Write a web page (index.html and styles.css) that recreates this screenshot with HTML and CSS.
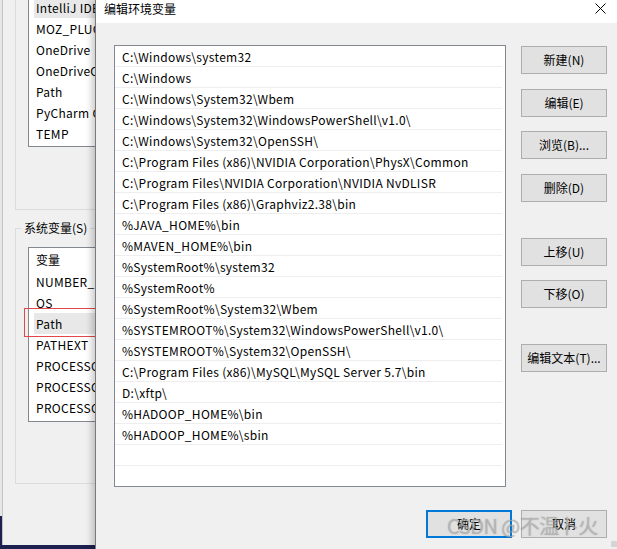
FILE: index.html
```html
<!DOCTYPE html>
<html lang="zh-CN">
<head>
<meta charset="utf-8">
<title>编辑环境变量</title>
<link rel="stylesheet" href="styles.css">
</head>
<body>
<div class="desktop">
  <div class="behind"></div>
  <div class="bgwin">
    <div class="group1">
      <div class="vlist vlist-user">
        <div class="vrow sel">IntelliJ IDE</div>
        <div class="vrow">MOZ_PLUG</div>
        <div class="vrow">OneDrive</div>
        <div class="vrow">OneDriveC</div>
        <div class="vrow">Path</div>
        <div class="vrow">PyCharm C</div>
        <div class="vrow">TEMP</div>
      </div>
    </div>
    <fieldset class="group2">
      <legend>系统变量(S)</legend>
      <div class="vlist vlist-sys">
        <div class="vhead">变量</div>
        <div class="vrow">NUMBER_</div>
        <div class="vrow">OS</div>
        <div class="vrow sel">Path</div>
        <div class="vrow">PATHEXT</div>
        <div class="vrow">PROCESSO</div>
        <div class="vrow">PROCESSO</div>
        <div class="vrow">PROCESSO</div>
      </div>
    </fieldset>
    <div class="redmark"></div>
  </div>

  <div class="dialog">
    <div class="titlebar">
      <span class="title">编辑环境变量</span>
      <svg class="close" width="11" height="11" viewBox="0 0 11 11"><path d="M0.5 0.5 L10.5 10.5 M10.5 0.5 L0.5 10.5" stroke="#000" stroke-width="1" fill="none"/></svg>
    </div>
    <div class="dbody">
      <div class="main">
        <div class="plist">
          <div class="prow">C:\Windows\system32</div>
          <div class="prow">C:\Windows</div>
          <div class="prow">C:\Windows\System32\Wbem</div>
          <div class="prow">C:\Windows\System32\WindowsPowerShell\v1.0\</div>
          <div class="prow">C:\Windows\System32\OpenSSH\</div>
          <div class="prow">C:\Program Files (x86)\NVIDIA Corporation\PhysX\Common</div>
          <div class="prow">C:\Program Files\NVIDIA Corporation\NVIDIA NvDLISR</div>
          <div class="prow">C:\Program Files (x86)\Graphviz2.38\bin</div>
          <div class="prow">%JAVA_HOME%\bin</div>
          <div class="prow">%MAVEN_HOME%\bin</div>
          <div class="prow">%SystemRoot%\system32</div>
          <div class="prow">%SystemRoot%</div>
          <div class="prow">%SystemRoot%\System32\Wbem</div>
          <div class="prow">%SYSTEMROOT%\System32\WindowsPowerShell\v1.0\</div>
          <div class="prow">%SYSTEMROOT%\System32\OpenSSH\</div>
          <div class="prow">C:\Program Files (x86)\MySQL\MySQL Server 5.7\bin</div>
          <div class="prow">D:\xftp\</div>
          <div class="prow">%HADOOP_HOME%\bin</div>
          <div class="prow">%HADOOP_HOME%\sbin</div>
          <div class="prow"></div>
          <div class="prow"></div>
        </div>
        <div class="btns">
          <button class="btn b-new">新建(N)</button>
          <button class="btn b-edit">编辑(E)</button>
          <button class="btn b-browse">浏览(B)...</button>
          <button class="btn b-del">删除(D)</button>
          <button class="btn b-up">上移(U)</button>
          <button class="btn b-down">下移(O)</button>
          <button class="btn b-text">编辑文本(T)...</button>
        </div>
      </div>
      <div class="footer">
        <button class="btn ok">确定</button>
        <button class="btn">取消</button>
      </div>
    </div>
    <div class="grip"></div>
  </div>

  <div class="watermark">CSDN @不温卜火</div>
</div>
</body>
</html>
```

FILE: styles.css
```css
* { box-sizing: border-box; }
html, body { margin: 0; padding: 0; }
body {
  width: 617px;
  height: 549px;
  overflow: hidden;
  background: #1d2150;
  font-family: "Noto Sans CJK SC", "Noto Sans", sans-serif;
  font-size: 12px;
  color: #000;
}
.desktop {
  position: relative;
  width: 617px;
  height: 549px;
  overflow: hidden;
}
.behind {
  position: absolute;
  left: 0;
  top: 0;
  width: 3px;
  height: 516px;
  background: #e6e6e6;
}
.bgwin {
  position: absolute;
  left: 2px;
  top: 0;
  width: 94px;
  height: 545px;
  background: #f0f0f0;
  border-left: 1px solid #c4c4c4;
  padding-left: 12px;
  overflow: hidden;
}
.group1 {
  margin-top: -20px;
  height: 230px;
  width: 100px;
  border: 1px solid #dcdcdc;
  padding: 15px 0 0 12px;
}
.vlist {
  background: #fff;
  border: 1px solid #828790;
  width: 68px;
  border-right: none;
  overflow: hidden;
}
.vlist-user {
  height: 151px;
}
.vrow {
  height: 21px;
  line-height: 21px;
  margin-left: 5px;
  padding-left: 2px;
  white-space: nowrap;
  overflow: hidden;
  letter-spacing: 0.3px;
}
.vrow.sel { background: #e8e8e8; }
.vhead {
  height: 23px;
  line-height: 23px;
  margin-left: 5px;
  padding-left: 2px;
}
.group2 {
  margin: 10px 0 0 0;
  width: 100px;
  border: 1px solid #dcdcdc;
  padding: 0 0 61px 12px;
  min-width: 0;
}
.group2 legend {
  padding: 0 3px;
  margin-left: -7px;
  line-height: 16px;
  font-size: 12px;
}
.vlist-sys {
  margin-top: 11px;
  height: 175px;
}
.redmark {
  position: absolute;
  left: 21px;
  top: 308px;
  width: 80px;
  height: 29px;
  border: 1px solid #e2474b;
}

.dialog {
  position: absolute;
  left: 95px;
  top: 0;
  width: 530px;
  height: 560px;
  background: #f0f0f0;
  border-left: 1px solid #7a7a7a;
  box-shadow: -3px 0 7px rgba(0, 0, 0, 0.22);
  display: flex;
  flex-direction: column;
}
.titlebar {
  height: 23px;
  background: #fff;
  display: flex;
  align-items: center;
  padding-left: 8px;
  padding-right: 19px;
  justify-content: space-between;
}
.title { line-height: 16px; position: relative; top: -3px; }
.close { position: relative; top: -3px; }
.dbody {
  padding: 22px 0 0 18px;
  width: 521px;
}
.main {
  display: flex;
  gap: 15px;
}
.plist {
  width: 392px;
  height: 442px;
  background: #fff;
  border: 1px solid #828790;
  padding-right: 3px;
  overflow: hidden;
}
.prow {
  height: 21px;
  line-height: 21px;
  border-bottom: 1px solid #eeeeee;
  padding-left: 7px;
  white-space: nowrap;
  letter-spacing: 0.3px;
}
.btns {
  display: flex;
  flex-direction: column;
  width: 86px;
}
.btn {
  font-family: "Noto Sans CJK SC", "Noto Sans", sans-serif;
  font-size: 12px;
  color: #000;
  width: 86px;
  height: 28px;
  background: #e1e1e1;
  border: 1px solid #adadad;
  padding: 0;
  margin: 0;
  line-height: 26px;
}
.b-new { margin-top: 1px; }
.b-edit { margin-top: 15px; }
.b-browse { margin-top: 14px; }
.b-del { margin-top: 15px; }
.b-up { margin-top: 36px; }
.b-down { margin-top: 14px; }
.b-text { margin-top: 36px; }
.footer {
  margin-top: 23px;
  display: flex;
  justify-content: flex-end;
  gap: 9px;
  padding-right: 10px;
}
.btn.ok {
  border: 2px solid #0078d7;
  line-height: 24px;
}
.grip {
  position: absolute;
  left: 515px;
  top: 541px;
  width: 6px;
  height: 6px;
  background: radial-gradient(circle, #b5b5b5 0.6px, transparent 0.8px) 0 0 / 2px 2px;
}
.watermark {
  position: absolute;
  left: 447px;
  top: 512px;
  font-family: "Noto Sans CJK SC", "Noto Sans", sans-serif;
  font-size: 20px;
  line-height: 28px;
  color: rgba(200, 200, 200, 0.55);
  text-shadow: 0 0 1px rgba(90, 90, 90, 0.55);
  white-space: nowrap;
  letter-spacing: -0.5px;
}
```
